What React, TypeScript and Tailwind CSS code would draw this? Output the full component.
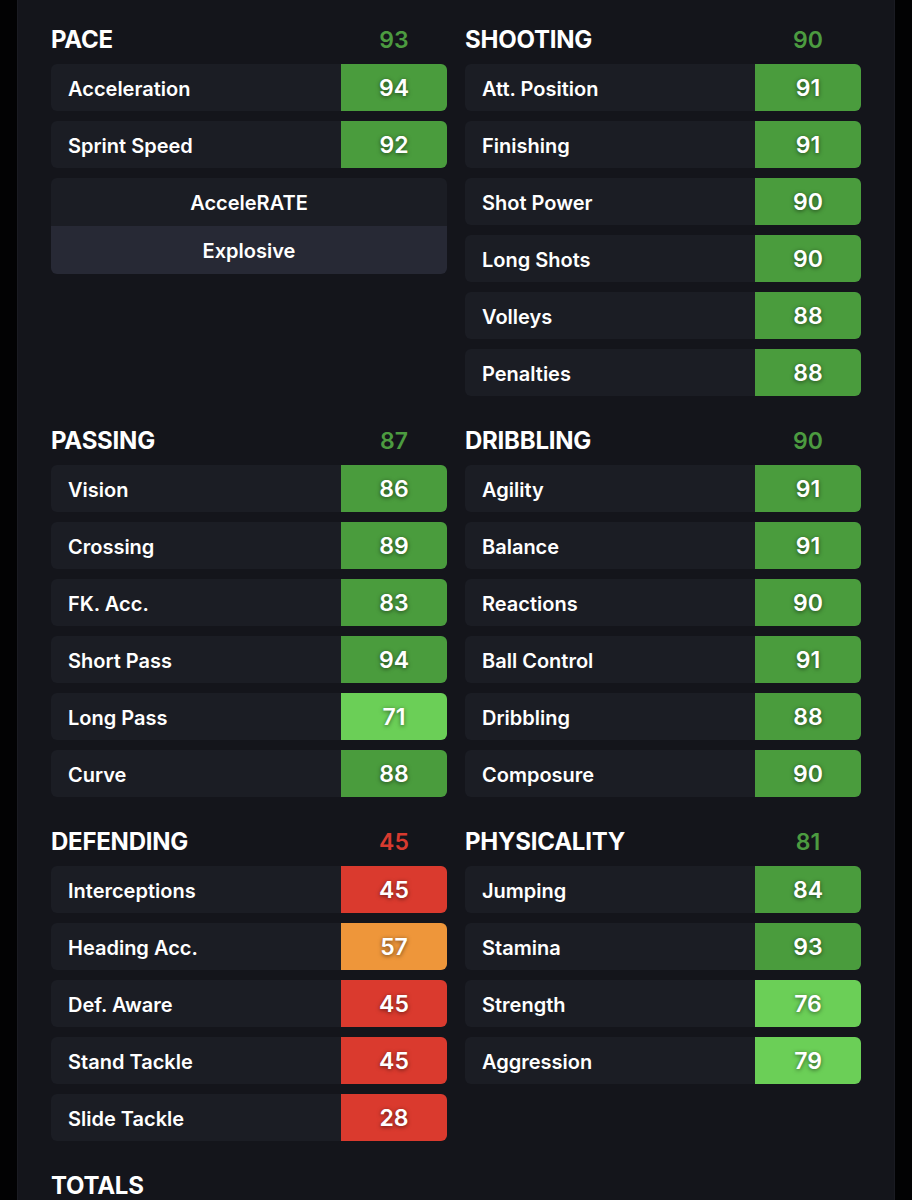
type Stat = { label: string; value: number };
type Section = { title: string; score: number; stats: Stat[]; extra?: string[] };

const sections: Section[] = [
    {
        title: 'PACE',
        score: 93,
        stats: [
            { label: 'Acceleration', value: 94 },
            { label: 'Sprint Speed', value: 92 },
        ],
        extra: ['AcceleRATE', 'Explosive'],
    },
    {
        title: 'SHOOTING',
        score: 90,
        stats: [
            { label: 'Att. Position', value: 91 },
            { label: 'Finishing', value: 91 },
            { label: 'Shot Power', value: 90 },
            { label: 'Long Shots', value: 90 },
            { label: 'Volleys', value: 88 },
            { label: 'Penalties', value: 88 },
        ],
    },
    {
        title: 'PASSING',
        score: 87,
        stats: [
            { label: 'Vision', value: 86 },
            { label: 'Crossing', value: 89 },
            { label: 'FK. Acc.', value: 83 },
            { label: 'Short Pass', value: 94 },
            { label: 'Long Pass', value: 71 },
            { label: 'Curve', value: 88 },
        ],
    },
    {
        title: 'DRIBBLING',
        score: 90,
        stats: [
            { label: 'Agility', value: 91 },
            { label: 'Balance', value: 91 },
            { label: 'Reactions', value: 90 },
            { label: 'Ball Control', value: 91 },
            { label: 'Dribbling', value: 88 },
            { label: 'Composure', value: 90 },
        ],
    },
    {
        title: 'DEFENDING',
        score: 45,
        stats: [
            { label: 'Interceptions', value: 45 },
            { label: 'Heading Acc.', value: 57 },
            { label: 'Def. Aware', value: 45 },
            { label: 'Stand Tackle', value: 45 },
            { label: 'Slide Tackle', value: 28 },
        ],
    },
    {
        title: 'PHYSICALITY',
        score: 81,
        stats: [
            { label: 'Jumping', value: 84 },
            { label: 'Stamina', value: 93 },
            { label: 'Strength', value: 76 },
            { label: 'Aggression', value: 79 },
        ],
    },
];

function boxColor(v: number) {
    if (v >= 80) return 'bg-[#4a9c3d]';
    if (v >= 70) return 'bg-[#6bcf57]';
    if (v >= 50) return 'bg-[#ee963a]';
    return 'bg-[#da3a2e]';
}

function scoreColor(v: number) {
    if (v >= 70) return 'text-[#4c9b40]';
    if (v >= 50) return 'text-[#ee963a]';
    return 'text-[#d83a2f]';
}

export default function App() {
    return (
        <div className="min-h-screen bg-[#020203] flex" style={{ fontFamily: 'Inter, "Noto Sans", sans-serif' }}>
            <div className="ml-[17px] w-[878px] bg-[#14151b] border-x border-[#1a1b22] px-[33px] pt-[27px] pb-10">
                <div className="grid grid-cols-2 gap-x-[18px] gap-y-[32px] items-start">
                    {sections.map((s) => (
                        <StatSection key={s.title} section={s} />
                    ))}
                    <div className="col-span-2">
                        <div className="h-[26px] flex items-center text-white text-[24px] font-bold tracking-[-0.01em]">
                            TOTALS
                        </div>
                    </div>
                </div>
            </div>
        </div>
    );
}

function StatSection({ section }: { section: Section }) {
    return (
        <div>
            <div className="h-[26px] flex items-center justify-between mb-[11px]">
                <span className="text-white text-[24px] font-bold tracking-[-0.01em]">{section.title}</span>
                <span className={`w-[106px] text-center text-[23px] font-semibold ${scoreColor(section.score)}`}>
                    {section.score}
                </span>
            </div>
            <div className="flex flex-col gap-[10px]">
                {section.stats.map((st) => (
                    <div key={st.label} className="h-[47px] flex rounded-md overflow-hidden bg-[#1b1d24]">
                        <div className="flex-1 flex items-center pl-[17px] pt-[2px] text-white text-[20px] font-semibold">
                            {st.label}
                        </div>
                        <div
                            className={`w-[106px] flex items-center justify-center pt-[1px] text-white text-[23px] font-semibold [text-shadow:0_1px_4px_rgba(0,0,0,0.55)] ${boxColor(st.value)}`}
                        >
                            {st.value}
                        </div>
                    </div>
                ))}
                {section.extra && (
                    <div className="rounded-md overflow-hidden flex flex-col">
                        <div className="h-[48px] flex items-center justify-center pt-[1px] bg-[#1b1d24] text-white text-[20px] font-semibold">
                            {section.extra[0]}
                        </div>
                        <div className="h-[48px] flex items-center justify-center pt-[1px] bg-[#272935] text-white text-[20px] font-semibold">
                            {section.extra[1]}
                        </div>
                    </div>
                )}
            </div>
        </div>
    );
}
